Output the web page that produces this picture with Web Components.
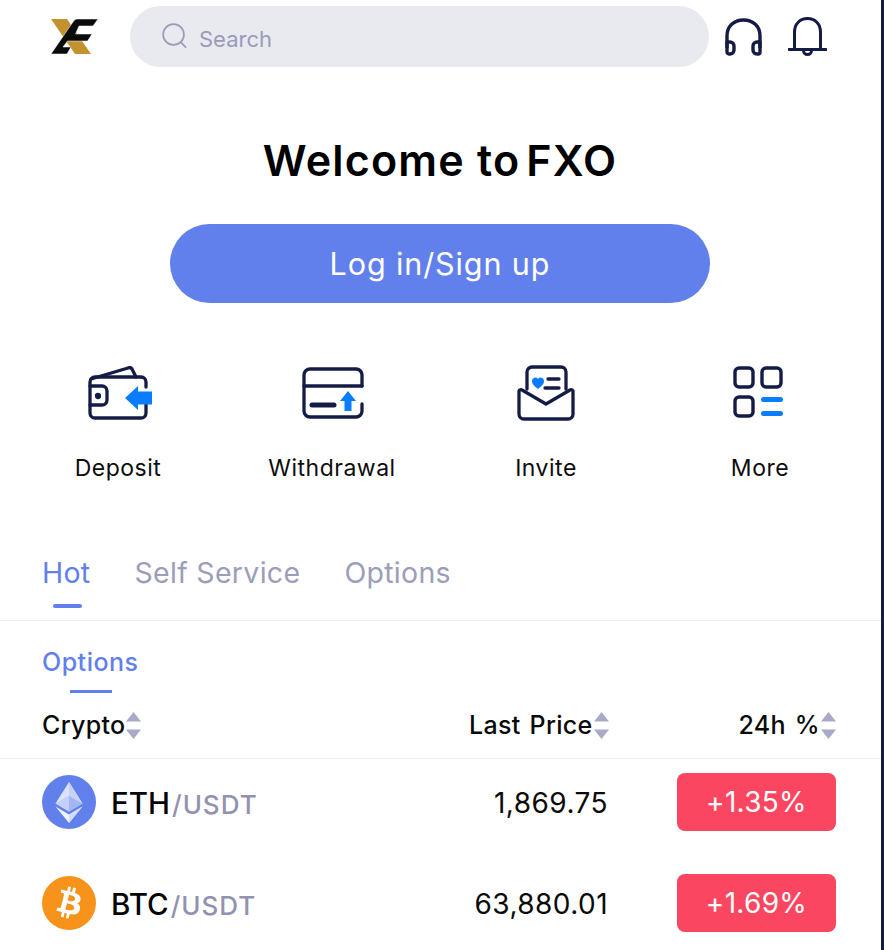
<!DOCTYPE html>
<html lang="en"><head><meta charset="utf-8"><title>FXO</title>
<style>
html,body{margin:0;background:#fff}
body{font-family:Inter,"Noto Sans",sans-serif;color:#000;height:950px;overflow:hidden}
.brand{margin-left:-6px}
</style>

<template id="t-topbar">
<style>
:host{display:flex;align-items:flex-start;height:78px}
.logo{margin:19px 0 0 51px;width:47px;height:35px;flex:none}
.search{margin:6px 0 0 32px;width:579px;height:61px;border-radius:31px;background:#e9eaf0;display:flex;align-items:center;gap:12px;padding-left:32px;box-sizing:border-box;color:#9a9bb8;font-size:22px;flex:none}
.search svg{width:25px;height:26px;margin-top:-1px}
.search span{padding-top:5px}
.head{margin:18px 0 0 16px;width:37px;height:38px;flex:none}
.bell{margin:17px 0 0 26px;width:39px;height:39px;flex:none}
</style>
<svg class="logo" viewBox="0 0 47 35">
<path d="M0 0H16L40 35H24z" fill="#c4912f"/>
<path d="M0 35L23 1.500Q24 0 26 0H47L42 7H28L24.500 15H41L36.500 22H16.500L12 28H20L16 35z" fill="#0b0b0b" stroke="#fff" stroke-width=".5"/>
</svg>
<div class="search">
<svg viewBox="0 0 26 27" fill="none" stroke="#9a9bb8" stroke-width="1.8" stroke-linecap="round"><circle cx="12" cy="12" r="10.800"/><path d="M20 20.500l4.500 4.500"/></svg>
<span>Search</span>
</div>
<svg class="head" viewBox="0 0 37 38" fill="none" stroke="#141c46" stroke-width="3.400" stroke-linejoin="round">
<path d="M2 30V18C2 8 9 2 18.500 2S35 8 35 18V30"/>
<path d="M2 24h3a4 4 0 0 1 4 4v4a4 4 0 0 1-4 4H4a2 2 0 0 1-2-2z"/>
<path d="M35 24h-3a4 4 0 0 0-4 4v4a4 4 0 0 0 4 4h1a2 2 0 0 0 2-2z"/>
</svg>
<svg class="bell" viewBox="0 0 39 39" fill="none" stroke="#141c46" stroke-width="3" stroke-linecap="round">
<path d="M6.500 32V15C6.500 7 12 1.500 19.500 1.500S32.500 7 32.500 15V32"/>
<path d="M1 32.500H38"/>
<path d="M15.500 33.500a4 4 0 0 0 8 0"/>
</svg>
</template>

<template id="t-hero">
<style>
:host{display:flex;flex-direction:column;align-items:center;width:880px;padding-top:56px}
h1{margin:0;font-size:43px;line-height:52px;font-weight:600;letter-spacing:1.200px;white-space:nowrap}
button{margin-top:38px;width:540px;height:79px;border:0;border-radius:40px;background:#6280ec;color:#fff;font:400 30.500px Inter,"Noto Sans",sans-serif;letter-spacing:.9px}
</style>
<h1><slot name="title"></slot></h1>
<button><slot name="action"></slot></button>
</template>

<template id="t-shortcut">
<style>
:host{display:flex;flex-direction:column;align-items:center;font-size:23px;letter-spacing:.5px;color:#0c0c0c}
.ic{height:60px;display:flex;align-items:center;justify-content:center}
.lb{margin-top:30px;line-height:30px;white-space:nowrap}
</style>
<div class="ic"><slot name="icon"></slot></div>
<div class="lb"><slot></slot></div>
</template>

<template id="t-sorthead">
<style>
:host{display:inline-flex;align-items:center;font-size:25px;line-height:30px;font-weight:450;letter-spacing:.3px;word-spacing:2px;color:#0a0a0a;white-space:nowrap}
svg{width:15px;height:27px;margin-left:1px;flex:none}
span{position:relative;top:-1px}
</style>
<span><slot></slot></span>
<svg viewBox="0 0 15 27" fill="#a9aaca"><path d="M7.500 0L15 9.500H0z"/><path d="M0 17.500H15L7.500 27z"/></svg>
</template>

<template id="t-market">
<style>
:host{display:grid;grid-template-columns:1fr 200px 228px;align-items:center;width:794px;padding:14px 0 29px 42px}
.pair{display:flex;align-items:center;gap:15px;font-size:29.500px;font-weight:500;color:#050505}
.pair ::slotted(svg){width:54px;height:54px;flex:none}
.name{padding-top:2px}
.quote{color:#9192b0;margin-left:2px;font-size:26px;font-weight:500;letter-spacing:1px}
.price{font-size:28px;text-align:right;color:#0a0a0a;letter-spacing:.45px;padding-top:2px}
.pct{justify-self:end;width:159px;height:58px;border-radius:8px;background:#fb4661;color:#fff;font-size:28px;letter-spacing:.3px;display:flex;align-items:center;justify-content:center}
</style>
<div class="pair"><slot name="coin"></slot><span class="name"><slot name="base"></slot><span class="quote">/USDT</span></span></div>
<div class="price"><slot name="price"></slot></div>
<div class="pct"><slot name="pct"></slot></div>
</template>

<template id="t-shortcuts">
<style>:host{display:grid;grid-template-columns:repeat(4,214px);padding:60px 0 0 11px}</style>
<slot></slot>
</template>

<template id="t-tabs">
<style>
:host{display:flex;gap:44px;height:114px;padding:48px 0 0 42px;box-sizing:border-box;border-bottom:1px solid #eeeef2;font-size:28.500px;color:#9c9db8;margin-top:24px;letter-spacing:.3px;position:relative;line-height:36px}
.on{color:#6280ec}
i{position:absolute;left:53px;top:97px;width:29px;height:4px;border-radius:2px;background:#6280ec}
</style>
<span class="on">Hot</span><span>Self Service</span><span>Options</span><i></i>
</template>

<template id="t-subtab">
<style>
:host{display:block;height:72px;padding:26px 0 0 42px;box-sizing:border-box;position:relative;font-size:25px;font-weight:450;letter-spacing:.5px;color:#6280ec;line-height:30px}
i{position:absolute;left:70px;top:69px;width:42px;height:3px;background:#6280ec}
</style>
<slot></slot><i></i>
</template>

<template id="t-tablehead">
<style>
:host{display:flex;align-items:center;height:66px;box-sizing:border-box;border-bottom:1px solid #eeeef2;padding:0 45px 0 42px}
.a{flex:1}.b{margin-right:130px}
</style>
<div class="a"><slot name="a"></slot></div><div class="b"><slot name="b"></slot></div><div><slot name="c"></slot></div>
</template>

<template id="t-app">
<style>
:host{display:block;width:881px;height:950px;border-right:3px solid #141c46;overflow:hidden}
</style>
<slot></slot>
</template>
</head>
<body>
<fxo-app>
  <fxo-topbar></fxo-topbar>
  <fxo-hero><span slot="title">Welcome to <span class="brand">FXO</span></span><span slot="action">Log in/Sign up</span></fxo-hero>
  <fxo-shortcuts>
    <fxo-shortcut>
      <svg slot="icon" width="64" height="54" viewBox="0 0 64 54" fill="none" stroke="#141c46" stroke-width="3.300" stroke-linejoin="round" stroke-linecap="round" style="margin-left:3px">
        <path d="M58 31v16a5 5 0 0 1-5 5H7a5 5 0 0 1-5-5V16a5 5 0 0 1 5-5h46a5 5 0 0 1 5 5v5"/>
        <path d="M3 13L40 2a3 3 0 0 1 4 1l4 8"/>
        <path d="M2 20h12a5 5 0 0 1 5 5v9a5 5 0 0 1-5 5H2"/>
        <circle cx="10" cy="30" r="1.500" fill="#141c46"/>
        <path d="M37 32L50 20V25.500H64V38.500H50V44z" fill="#0a7cff" stroke="none"/>
      </svg>
      Deposit
    </fxo-shortcut>
    <fxo-shortcut>
      <svg slot="icon" width="62" height="52" viewBox="0 0 62 52" fill="none" stroke="#141c46" stroke-width="3.300" stroke-linecap="round" style="margin-left:1px">
        <path d="M60 19V8a6 6 0 0 0-6-6H8a6 6 0 0 0-6 6v36a6 6 0 0 0 6 6h46a6 6 0 0 0 6-6v-7"/>
        <path d="M2 19H60"/>
        <path d="M10 38H32" stroke-width="5"/>
        <path d="M46 24L54 34H49.500V44H42.500V34H38z" fill="#0a7cff" stroke="none"/>
      </svg>
      Withdrawal
    </fxo-shortcut>
    <fxo-shortcut>
      <svg slot="icon" width="58" height="56" viewBox="0 0 58 56" fill="none" stroke="#141c46" stroke-width="3.300" stroke-linejoin="round" stroke-linecap="round">
        <path d="M10 24V7a5 5 0 0 1 5-5h29a5 5 0 0 1 5 5v17"/>
        <path d="M2 26a2 2 0 0 1 3-1l24 14 24-14a2 2 0 0 1 3 1v23a5 5 0 0 1-5 5H7a5 5 0 0 1-5-5z"/>
        <path d="M21 24c-2-2-6-4-6-8a3.300 3.300 0 0 1 6-2 3.300 3.300 0 0 1 6 2c0 4-4 6-6 8z" fill="#0a7cff" stroke="none"/>
        <path d="M31 14H42M28 23H42"/>
      </svg>
      Invite
    </fxo-shortcut>
    <fxo-shortcut>
      <svg slot="icon" width="50" height="52" viewBox="0 0 50 52" fill="none" stroke="#141c46" stroke-width="3.400" style="margin:-2px 4px 0 0">
        <rect x="2" y="2" width="18" height="19" rx="4"/>
        <rect x="29" y="2" width="19" height="19" rx="4"/>
        <rect x="2" y="31" width="18" height="19" rx="4"/>
        <path d="M30.500 33.500H47.500M30.500 47.500H47.500" stroke="#0a7cff" stroke-width="5" stroke-linecap="round"/>
      </svg>
      More
    </fxo-shortcut>
  </fxo-shortcuts>
  <fxo-tabs></fxo-tabs>
  <fxo-subtab>Options</fxo-subtab>
  <fxo-tablehead>
    <fxo-sorthead slot="a">Crypto</fxo-sorthead>
    <fxo-sorthead slot="b">Last Price</fxo-sorthead>
    <fxo-sorthead slot="c">24h %</fxo-sorthead>
  </fxo-tablehead>
  <fxo-market>
    <svg slot="coin" viewBox="0 0 54 54">
      <circle cx="27" cy="27" r="27" fill="#6280ec"/>
      <path d="M27 7L13.500 28.500 27 36.500 40.500 28.500z" fill="#dbe2fb"/>
      <path d="M27 20.500L13.500 28.500 27 36.500z" fill="#c3cff8"/><path d="M27 20.500L40.500 28.500 27 36.500z" fill="#a4b5f3"/>
      <path d="M27 7L40.500 28.500 27 20.500z" fill="#c6d2f8"/>
      <path d="M13.500 31.500L27 39.500 40.500 31.500 27 48z" fill="#f0f3fe"/><path d="M27 39.500L40.500 31.500 27 48z" fill="#d3dcfa"/>
    </svg>
    <span slot="base">ETH</span><span slot="price">1,869.75</span><span slot="pct">+1.35%</span>
  </fxo-market>
  <fxo-market>
    <svg slot="coin" viewBox="0 0 54 54">
      <circle cx="27" cy="27" r="27" fill="#f7931a"/>
      <path fill="#fff" fill-rule="evenodd" d="M38.500 23.300c.5-3.400-2.100-5.200-5.600-6.400l1.100-4.600-2.800-.7-1.100 4.500-2.200-.5 1.100-4.500-2.800-.7-1.100 4.600-1.800-.4-3.900-1-.7 3 2 .5c1.100.3 1.300 1 1.300 1.600l-3.100 12.500c-.1.400-.5.900-1.300.7l-2-.5-1.400 3.200 3.700.9 2 .5-1.200 4.700 2.800.7 1.100-4.600 2.300.6-1.100 4.500 2.800.7 1.200-4.600c4.800.9 8.400.5 9.900-3.800 1.200-3.500-.1-5.500-2.600-6.800 1.800-.5 3.200-1.700 3.500-4.100zm-6.400 9c-.9 3.500-6.800 1.600-8.700 1.100l1.500-6.200c1.900.5 8.100 1.400 7.200 5.100zm.9-9.100c-.8 3.200-5.700 1.600-7.300 1.200l1.400-5.600c1.600.4 6.700 1.100 5.900 4.400z"/>
    </svg>
    <span slot="base">BTC</span><span slot="price">63,880.01</span><span slot="pct">+1.69%</span>
  </fxo-market>
</fxo-app>
<script>
const reg = (name, tpl) => customElements.define(name, class extends HTMLElement {
  constructor() {
    super()
    this.attachShadow({ mode: 'open' }).appendChild(document.querySelector(tpl).content.cloneNode(true))
  }
})
reg('fxo-app', '#t-app')
reg('fxo-topbar', '#t-topbar')
reg('fxo-hero', '#t-hero')
reg('fxo-shortcuts', '#t-shortcuts')
reg('fxo-shortcut', '#t-shortcut')
reg('fxo-tabs', '#t-tabs')
reg('fxo-subtab', '#t-subtab')
reg('fxo-tablehead', '#t-tablehead')
reg('fxo-sorthead', '#t-sorthead')
reg('fxo-market', '#t-market')
</script>
</body></html>
